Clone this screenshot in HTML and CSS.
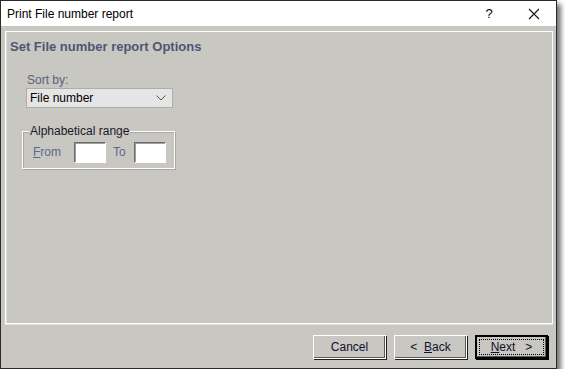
FILE: index.html
```html
<!DOCTYPE html>
<html lang="en">
<head>
  <meta charset="UTF-8"/>
  <title>Print File number report</title>
  <link rel="stylesheet" href="styles.css">
</head>
<body>
  <div class="window">
    <div class="titlebar">
      <span class="title">Print File number report</span>
      <span class="help">?</span>
      <span class="close">
        <svg width="12" height="12" viewBox="0 0 12 12"><path d="M1 1L11 11M11 1L1 11" stroke="#111" stroke-width="1.1" fill="none"/></svg>
      </span>
    </div>
    <div class="content">
      <div class="panel">
        <h1>Set File number report Options</h1>
        <label class="caption">Sort by:</label>
        <div class="select">
          <span>File number</span>
          <svg width="10" height="6" viewBox="0 0 10 6"><path d="M0.5 0.5L5 5L9.5 0.5" stroke="#555" stroke-width="1" fill="none"/></svg>
        </div>
        <div class="group">
          <span class="legend">Alphabetical range</span>
          <span class="field-label from"><u>F</u>rom</span>
          <span class="textbox"></span>
          <span class="field-label to">To</span>
          <span class="textbox"></span>
        </div>
      </div>
    </div>
    <div class="footer">
      <button class="btn">Cancel</button>
      <button class="btn">&lt;&nbsp;&nbsp;<u>B</u>ack</button>
      <button class="btn default"><span class="focus"><u>N</u>ext&nbsp;&nbsp;&nbsp;&gt;</span></button>
    </div>
  </div>
</body>
</html>
```

FILE: styles.css
```css
body {
  margin:0; padding:0;
  background:#fff;
  font-family:"Liberation Sans",Arial,sans-serif;
  font-size:12px;
}

/* Dialog frame */
.window {
  width:557px; height:369px;
  box-sizing:border-box;
  border:1px solid #2a2a2a;
  background:#c9c7c1;
  display:flex; flex-direction:column;
  box-shadow:4px 4px 5px rgba(0,0,0,0.55);
}
.titlebar {
  height:25px; flex:none;
  background:#fff;
  display:flex; align-items:center;
  color:#000;
}
.title { padding-left:6px; flex:1; font-size:12px; }
.help { width:20px; text-align:center; margin-right:25px; font-size:13px; }
.close { width:20px; margin-right:12px; display:flex; justify-content:center; }

/* Page area */
.content { padding:5px 3px 0 4px; flex:1; display:flex; }
.panel {
  flex:1;
  border:1px solid #fff;
  box-shadow:0 1px 0 #e2e1dd, inset 1px 0 0 #dddcd7;
  padding:7px 0 0 4px;
  display:flex; flex-direction:column; align-items:flex-start;
  margin-bottom:2px;
}
h1 {
  margin:0 0 19px;
  font-size:13px; font-weight:bold;
  color:#4b5775;
}
.caption { color:#55627f; margin-left:17px; margin-bottom:1px; }
.select {
  margin-left:16px;
  width:136px; height:18px;
  background:#e5e5e5; border:1px solid #adadad;
  display:flex; align-items:center; justify-content:space-between;
  padding:0 6px 0 3px;
  color:#000;
}

/* Range group */
.group {
  position:relative;
  margin:23px 0 0 12px;
  width:151px; height:32px;
  border:1px solid #fff;
  box-shadow:inset 1px 1px 0 #a8a7a3, 1px 1px 0 #a8a7a3;
  display:flex; align-items:center;
  padding-top:4px; box-sizing:content-box;
}
.legend {
  position:absolute; top:-8px; left:6px;
  padding:0 1px;
  background:#c9c7c1;
  color:#1a1a2a;
}
.field-label { color:#5a6a8c; }
.from { margin:0 13px 0 10px; }
.to { margin:0 8px 0 7px; }
.textbox {
  width:32px; height:21px;
  box-sizing:border-box;
  background:#fff;
  border:1px solid #fff;
  border-top-color:#6b6b6b; border-left-color:#6b6b6b;
  box-shadow:inset 1px 1px 0 #a0a0a0;
}

/* Buttons */
.footer {
  height:42px; flex:none;
  display:flex; justify-content:flex-end; align-items:center;
  gap:8px; padding-right:8px;
}
.btn {
  width:73px; height:24px;
  font-family:"Liberation Sans",Arial,sans-serif; font-size:12px;
  color:#101030;
  background:#c9c7c1;
  border:1px solid #fff;
  box-shadow:inset -1px -1px 0 #5a5a5a, 1px 1px 0 #1f1f1f;
  padding:0;
}
.btn.default {
  border:1px solid #000;
  box-shadow:inset 0 0 0 1px #000, inset -2px -2px 0 #5a5a5a, 1px 1px 0 #000;
  padding:3px;
}
.focus {
  display:flex; align-items:center; justify-content:center;
  height:100%;
  border:1px dotted #000; box-sizing:border-box;
}
```
